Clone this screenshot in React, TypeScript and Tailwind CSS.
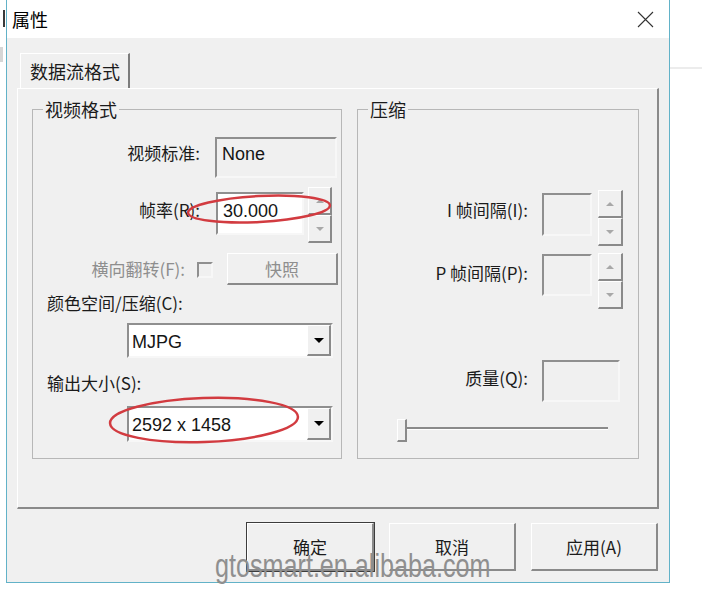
const lbl = "font-['Noto_Sans_CJK_SC',sans-serif] text-[17px] leading-[24px] text-[#1b1b1b] whitespace-nowrap";
const lblOff = "font-['Noto_Sans_CJK_SC',sans-serif] text-[17px] leading-[24px] text-[#8e8e8e] whitespace-nowrap";
const title = "font-['Noto_Sans_CJK_SC',sans-serif] text-[18px] leading-[24px] text-[#1b1b1b] whitespace-nowrap";
const val = "font-['Liberation_Sans',sans-serif] text-[18px] leading-[22px] text-[#151515]";
const sunken = "border-2 border-t-[#8f8f8f] border-l-[#8f8f8f] border-r-[#f7f7f7] border-b-[#f7f7f7]";
const raised = "border-t border-l border-white border-r-2 border-b-2 border-r-[#8a8a8a] border-b-[#8a8a8a]";

const Up = () => <div className="w-0 h-0 border-x-[4px] border-x-transparent border-b-[4px] border-b-[#a8a8a8]" />;
const Down = () => <div className="w-0 h-0 border-x-[4px] border-x-transparent border-t-[4px] border-t-[#a8a8a8]" />;

const Spinner = ({ w = "w-[24px]" }: { w?: string }) => (
    <div className={`flex flex-col h-[56px] ${w}`}>
        <div className={`flex-1 flex items-center justify-center bg-[#f0f0f0] ${raised}`}><Up /></div>
        <div className={`flex-1 flex items-center justify-center bg-[#f0f0f0] ${raised}`}><Down /></div>
    </div>
);

const Combo = ({ value, h }: { value: string, h: string }) => (
    <div className={`flex w-[206px] bg-white ${h} ${sunken}`}>
        <span className={`flex-1 pl-[3px] pt-[6px] ${val}`}>{value}</span>
        <div className={`w-[24px] flex items-center justify-center bg-[#f0f0f0] ${raised}`}>
            <div className="w-0 h-0 border-x-[5px] border-x-transparent border-t-[5px] border-t-black" />
        </div>
    </div>
);

const Button = ({ text, def }: { text: string, def?: boolean }) => (
    <div className={`w-[127px] h-[48px] flex items-center justify-center bg-[#f0f0f0] ${def ? "outline outline-[#3c3c3c]" : ""} ${raised}`}>
        <span className={lbl}>{text}</span>
    </div>
);

const App = () => {
    return (
        <div className="relative w-[702px] h-[590px] bg-white flex overflow-hidden">
            {/* page behind the dialog */}
            <div className="w-[6px] shrink-0">
                <div className="ml-[3px] mt-[10px] w-[2px] h-[17px] bg-[#3a3a3a]" />
                <div className="mt-[20px] w-[3px] h-[15px] bg-[#d6d6d6]" />
            </div>

            <div className="w-[664px] h-[583px] shrink-0 flex flex-col border-x border-b border-[#62b2c8]">
                {/* title bar */}
                <div className="h-[38px] flex items-center justify-between bg-white pl-[5px] pr-[15px]">
                    <span className={`${title} text-black`}>属性</span>
                    <svg width="17" height="17" viewBox="0 0 17 17">
                        <path d="M1 1 L16 16 M16 1 L1 16" stroke="#333" strokeWidth="1.1" />
                    </svg>
                </div>

                <div className="flex-1 bg-[#f0f0f0] flex flex-col pt-[15px]">
                    {/* tab */}
                    <div className="ml-[13px] w-[110px] h-[35px] flex items-center pl-[9px] border-t border-l border-white border-r-2 border-r-[#7c7c7c]">
                        <span className={title}>数据流格式</span>
                    </div>

                    {/* tab panel */}
                    <div className="ml-[10px] w-[642px] h-[421px] border-t border-l border-white border-r-2 border-b-2 border-r-[#8a8a8a] border-b-[#8a8a8a] flex gap-[15px] pt-[8px] pl-[14px]">
                        <fieldset className="w-[310px] h-[362px] border border-[#b7b7b7]">
                            <legend className={`ml-[10px] px-[2px] ${title}`}>视频格式</legend>

                            <div className="flex items-start mt-[16px]">
                                <div className={`w-[167px] text-right mt-[4px] ${lbl}`}>视频标准:</div>
                                <div className={`ml-[15px] w-[122px] h-[41px] bg-[#f0f0f0] pl-[5px] pt-[3px] ${sunken}`}>
                                    <span className={val}>None</span>
                                </div>
                            </div>

                            <div className="flex items-start mt-[9px]">
                                <div className={`w-[167px] text-right mt-[11px] ${lbl}`}>帧率(R):</div>
                                <div className={`ml-[16px] mt-[5px] w-[88px] h-[43px] bg-white pl-[5px] pt-[5px] ${sunken}`}>
                                    <span className={val}>30.000</span>
                                </div>
                                <div className="ml-[4px]"><Spinner /></div>
                            </div>

                            <div className="flex items-start mt-[10px]">
                                <div className={`w-[152px] text-right mt-[4px] ${lblOff}`}>横向翻转(F):</div>
                                <div className={`ml-[12px] mt-[9px] w-[16px] h-[16px] bg-[#f0f0f0] ${sunken}`} />
                                <div className={`ml-[14px] w-[111px] h-[32px] flex items-center justify-center bg-[#f0f0f0] ${raised}`}>
                                    <span className={lblOff}>快照</span>
                                </div>
                            </div>

                            <div className={`ml-[14px] mt-[6px] ${lbl}`}>颜色空间/压缩(C):</div>
                            <div className="ml-[94px] mt-[8px]"><Combo value="MJPG" h="h-[35px]" /></div>
                            <div className={`ml-[14px] mt-[13px] ${lbl}`}>输出大小(S):</div>
                            <div className="ml-[94px] mt-[11px]"><Combo value="2592 x 1458" h="h-[36px]" /></div>
                        </fieldset>

                        <fieldset className="w-[282px] h-[362px] border border-[#b7b7b7]">
                            <legend className={`ml-[10px] px-[2px] ${title}`}>压缩</legend>

                            <div className="flex items-start mt-[69px]">
                                <div className={`w-[170px] text-right mt-[8px] ${lbl}`}>I 帧间隔(I):</div>
                                <div className={`ml-[14px] mt-[3px] w-[50px] h-[43px] bg-[#f0f0f0] ${sunken}`} />
                                <div className="ml-[6px]"><Spinner w="w-[25px]" /></div>
                            </div>

                            <div className="flex items-start mt-[7px]">
                                <div className={`w-[170px] text-right mt-[8px] ${lbl}`}>P 帧间隔(P):</div>
                                <div className={`ml-[14px] mt-[1px] w-[50px] h-[42px] bg-[#f0f0f0] ${sunken}`} />
                                <div className="ml-[6px]"><Spinner w="w-[25px]" /></div>
                            </div>

                            <div className="flex items-start mt-[51px]">
                                <div className={`w-[170px] text-right mt-[6px] ${lbl}`}>质量(Q):</div>
                                <div className={`ml-[14px] w-[78px] h-[42px] bg-[#f0f0f0] ${sunken}`} />
                            </div>

                            <div className="flex items-start mt-[17px]">
                                <div className={`ml-[39px] w-[10px] h-[23px] bg-[#f0f0f0] ${raised}`} />
                                <div className="mt-[8px] w-[201px] h-[3px] border-t-2 border-t-[#8a8a8a] border-b border-b-white" />
                            </div>
                        </fieldset>
                    </div>

                    {/* dialog buttons */}
                    <div className="flex justify-end gap-[15px] pr-[11px] mt-[14px]">
                        <Button text="确定" def />
                        <Button text="取消" />
                        <Button text="应用(A)" />
                    </div>
                </div>
            </div>

            <div className="flex-1">
                <div className="mt-[67px] h-[2px] bg-[#ececec]" />
            </div>

            {/* annotation marks drawn over the screenshot */}
            <svg className="absolute left-0 top-0 pointer-events-none" width="702" height="590">
                <ellipse cx="259" cy="209" rx="71" ry="13" fill="none" stroke="#d23b40" strokeWidth="2.5" transform="rotate(-3 259 209)" />
                <ellipse cx="204" cy="420" rx="94" ry="22" fill="none" stroke="#d23b40" strokeWidth="2.5" transform="rotate(-2 204 420)" />
            </svg>

            <div className="absolute left-[215px] top-[548px] origin-left scale-x-[0.74] font-['Liberation_Sans',sans-serif] text-[34px] leading-none text-[#8f8f8f] whitespace-nowrap pointer-events-none">
                gtosmart.en.alibaba.com
            </div>
        </div>
    )
}

export default App;
